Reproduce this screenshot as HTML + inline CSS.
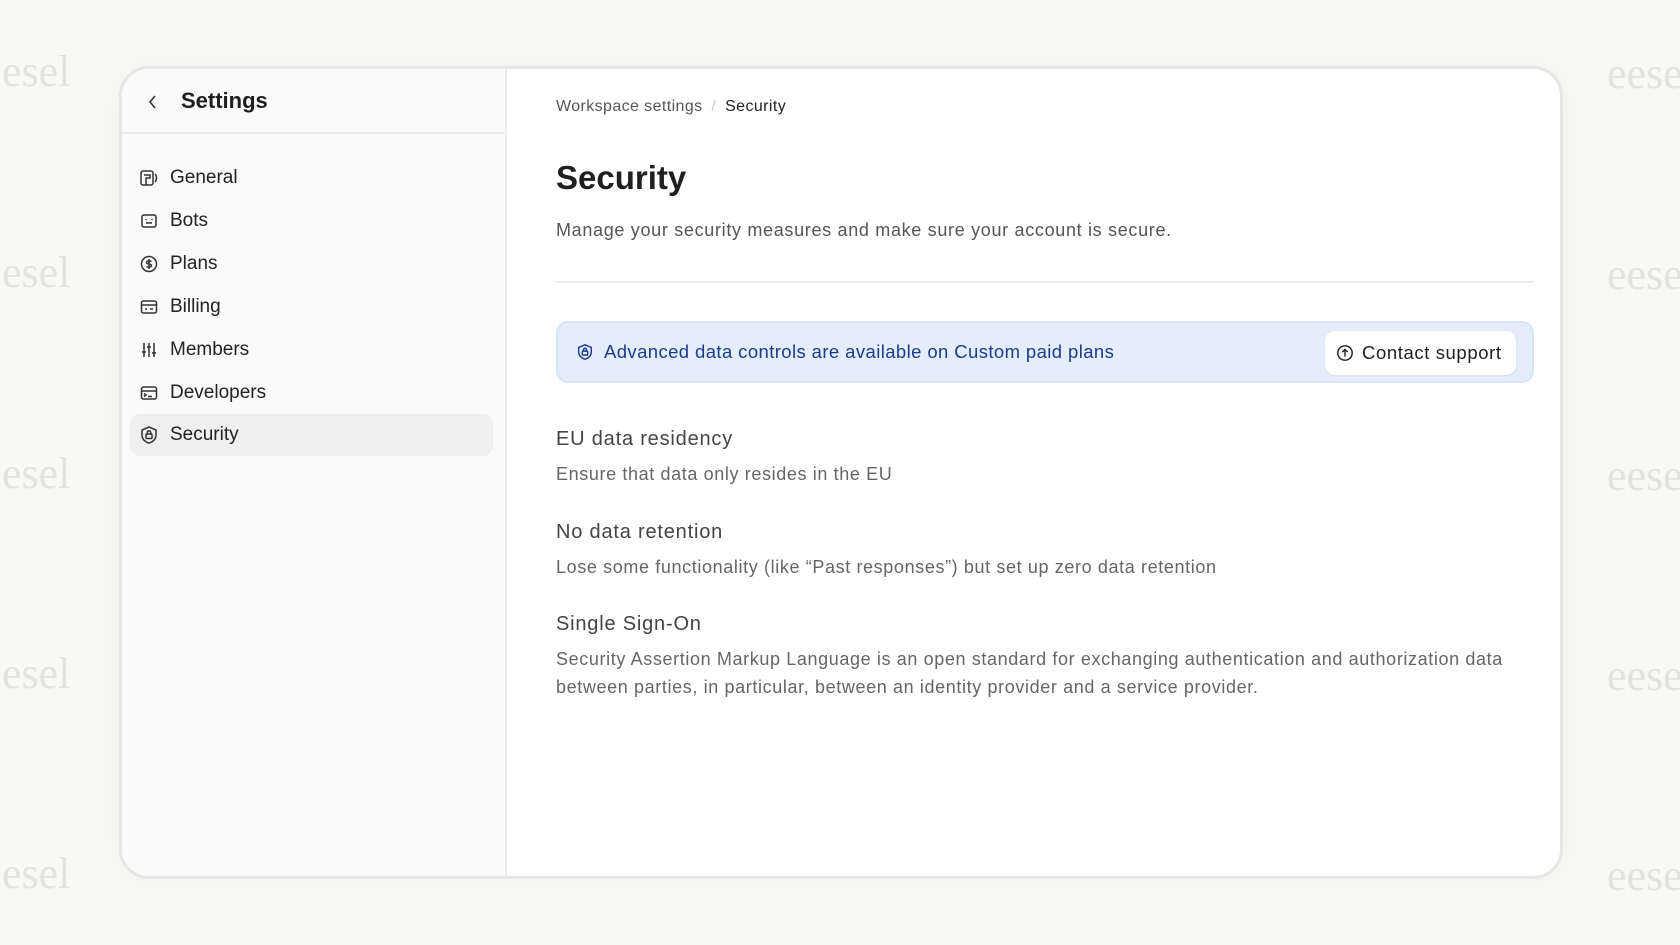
<!DOCTYPE html>
<html><head><meta charset="utf-8"><style>
*{box-sizing:border-box;margin:0;padding:0}
body{width:1680px;height:945px;background:#f8f8f7;font-family:"Liberation Sans",sans-serif;position:relative;overflow:hidden;color:#1a1a1a}
.wm{position:absolute;font-family:"Liberation Serif",serif;font-size:44px;color:#e2e2e0;line-height:1}
.card{position:absolute;left:119px;top:66px;width:1444px;height:813px;background:#fff;border:3px solid #e6e6e5;border-radius:30px;overflow:hidden;box-shadow:0 0 40px rgba(0,0,0,0.04)}
.side{position:absolute;left:0;top:0;width:385px;height:100%;background:#fafafa;border-right:2px solid #ececec}
.hdr{height:65px;border-bottom:2px solid #ececec;position:relative}
.hdr .t{position:absolute;left:59px;top:19px;font-size:22px;font-weight:bold;color:#1f1f1f}
.hdr svg{position:absolute;left:25px;top:25px}
.item{position:absolute;left:8px;width:363px;height:42px;display:flex;align-items:center;font-size:19px;color:#222}
.item svg{position:absolute;left:9px}
.item span{position:absolute;left:40px}
.act{background:#efefef;border-radius:10px}
.main{position:absolute;left:434px;top:0}
.abs{position:absolute;white-space:nowrap}
.h{font-size:20px;color:#444;letter-spacing:0.8px}
.s{font-size:18px;color:#666;letter-spacing:0.62px}
</style></head><body>
<div class="wm" style="left:2px;top:50px">esel</div>
<div class="wm" style="left:2px;top:251px">esel</div>
<div class="wm" style="left:2px;top:452px">esel</div>
<div class="wm" style="left:2px;top:652px">esel</div>
<div class="wm" style="left:2px;top:852px">esel</div>
<div class="wm" style="left:1607px;top:52px">eese</div>
<div class="wm" style="left:1607px;top:253px">eese</div>
<div class="wm" style="left:1607px;top:454px">eese</div>
<div class="wm" style="left:1607px;top:654px">eese</div>
<div class="wm" style="left:1607px;top:854px">eese</div>
<div class="card">
 <div class="side">
  <div class="hdr"><svg width="12" height="16" viewBox="0 0 12 16"><path d="M8 2L3 8l5 6" fill="none" stroke="#333" stroke-width="1.6"/></svg><div class="t">Settings</div></div>
  <div class="item" style="top:88px"><svg width="20" height="20" viewBox="0 0 20 20" fill="none" stroke="#333" stroke-width="1.5"><rect x="2" y="3" width="12" height="14" rx="2"/><path d="M5 7h6v3H7v7M16 6c2 2 2 6 0 8"/></svg><span>General</span></div>
  <div class="item" style="top:131px"><svg width="20" height="20" viewBox="0 0 20 20" fill="none" stroke="#333" stroke-width="1.5"><rect x="3" y="4" width="14" height="12" rx="2"/><path d="M7 8v1M13 8v1M7 12h6"/></svg><span>Bots</span></div>
  <div class="item" style="top:174px"><svg width="20" height="20" viewBox="0 0 20 20" fill="none" stroke="#333" stroke-width="1.5"><circle cx="10" cy="10" r="7.5"/><path d="M12.5 7.5c-1-1-5-1-5 1s5 1 5 3-4 2-5 1M10 5v10"/></svg><span>Plans</span></div>
  <div class="item" style="top:217px"><svg width="20" height="20" viewBox="0 0 20 20" fill="none" stroke="#333" stroke-width="1.5"><rect x="2.5" y="4" width="15" height="12" rx="2"/><path d="M2.5 8h15M6 12h2M11 12h3"/></svg><span>Billing</span></div>
  <div class="item" style="top:260px"><svg width="20" height="20" viewBox="0 0 20 20" fill="none" stroke="#333" stroke-width="1.5"><path d="M5 3v14M10 3v14M15 3v14M3 12h4M8 7h4M13 13h4"/></svg><span>Members</span></div>
  <div class="item" style="top:303px"><svg width="20" height="20" viewBox="0 0 20 20" fill="none" stroke="#333" stroke-width="1.5"><rect x="2.5" y="4" width="15" height="12" rx="2"/><path d="M2.5 8h15M5 10.5l2 1.5-2 1.5M9 13.5h4"/></svg><span>Developers</span></div>
  <div class="item act" style="top:345px"><svg width="20" height="20" viewBox="0 0 20 20" fill="none" stroke="#333" stroke-width="1.5"><path d="M10 2l7 3v5c0 4-3 7-7 8-4-1-7-4-7-8V5z"/><rect x="7" y="9" width="6" height="4.5" rx="1"/><path d="M8.3 9V7.5a1.7 1.7 0 013.4 0V9"/></svg><span>Security</span></div>
 </div>
 <div class="main">
  <div class="abs" style="left:0;top:29px;font-size:16px;color:#555;letter-spacing:0.4px">Workspace settings <span style="color:#ccc;margin:0 4px">/</span> <span style="color:#222">Security</span></div>
  <div class="abs" style="left:0;top:90px;font-size:33px;font-weight:bold;color:#1f1f1f">Security</div>
  <div class="abs" style="left:0;top:151px;font-size:18px;color:#555;letter-spacing:0.68px">Manage your security measures and make sure your account is secure.</div>
  <div class="abs" style="left:0;top:212px;width:978px;height:2px;background:#ececec"></div>
  <div class="abs" style="left:0;top:252px;width:978px;height:62px;background:#e4edfc;border:2px solid #d6e3f9;border-radius:12px">
   <svg style="position:absolute;left:18px;top:20px" width="18" height="18" viewBox="0 0 20 20" fill="none" stroke="#1e3a8a" stroke-width="1.6"><path d="M10 2l7 3v5c0 4-3 7-7 8-4-1-7-4-7-8V5z"/><rect x="7" y="9" width="6" height="4.5" rx="1"/><path d="M8.3 9V7.5a1.7 1.7 0 013.4 0V9"/></svg>
   <div class="abs" style="left:46px;top:18px;font-size:18.5px;color:#1e3a8a;letter-spacing:0.4px">Advanced data controls are available on Custom paid plans</div>
   <div class="abs" style="left:767px;top:8px;width:191px;height:44px;background:#fff;border-radius:10px;box-shadow:0 1px 2px rgba(0,0,0,0.08)">
    <svg style="position:absolute;left:11px;top:13px" width="18" height="18" viewBox="0 0 20 20" fill="none" stroke="#222" stroke-width="1.6"><circle cx="10" cy="10" r="8"/><path d="M10 14V6.5M7 9l3-3 3 3"/></svg>
    <div class="abs" style="left:37px;top:11px;font-size:18.5px;color:#1f1f1f;letter-spacing:0.6px">Contact support</div>
   </div>
  </div>
  <div class="abs h" style="left:0;top:359px">EU data residency</div>
  <div class="abs s" style="left:0;top:395px">Ensure that data only resides in the EU</div>
  <div class="abs h" style="left:0;top:452px">No data retention</div>
  <div class="abs s" style="left:0;top:488px">Lose some functionality (like “Past responses”) but set up zero data retention</div>
  <div class="abs h" style="left:0;top:544px">Single Sign-On</div>
  <div class="abs s" style="left:0;top:576px;line-height:28px">Security Assertion Markup Language is an open standard for exchanging authentication and authorization data<br>between parties, in particular, between an identity provider and a service provider.</div>
 </div>
</div>
</body></html>
